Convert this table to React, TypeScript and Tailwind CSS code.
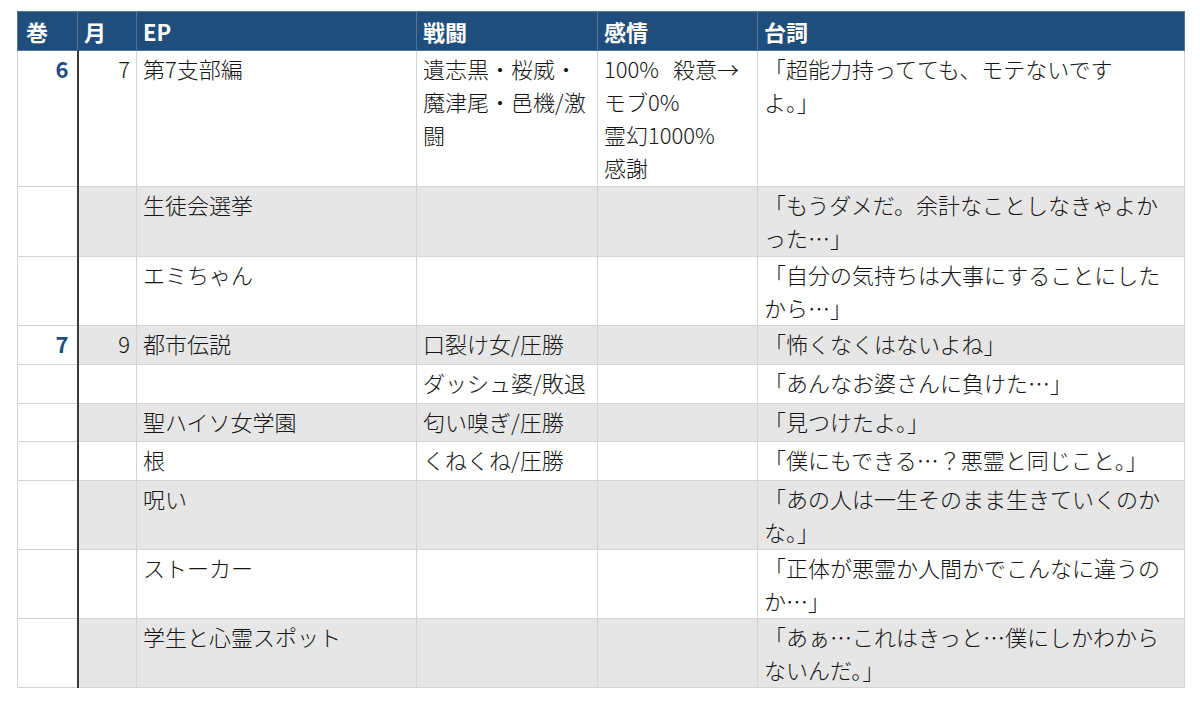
import React from 'react';

type Row = {
  vol?: string;
  month?: string;
  ep?: string;
  battle?: React.ReactNode[];
  feeling?: React.ReactNode[];
  line: string[];
  h: string;
};

const rows: Row[] = [
  {
    vol: '6',
    month: '7',
    ep: '第7支部編',
    battle: ['遺志黒・桜威・', '魔津尾・邑機/激', '闘'],
    feeling: [
      <>
        100%<span className="ml-[14px]">殺意→</span>
      </>,
      'モブ0%',
      '霊幻1000%',
      '感謝',
    ],
    line: ['「超能力持ってても、モテないです', 'よ。」'],
    h: 'h-[136px]',
  },
  { ep: '生徒会選挙', line: ['「もうダメだ。余計なことしなきゃよか', 'った…」'], h: 'h-[70px]' },
  { ep: 'エミちゃん', line: ['「自分の気持ちは大事にすることにした', 'から…」'], h: 'h-[69px]' },
  { vol: '7', month: '9', ep: '都市伝説', battle: ['口裂け女/圧勝'], line: ['「怖くなくはないよね」'], h: 'h-[39px]' },
  { battle: ['ダッシュ婆/敗退'], line: ['「あんなお婆さんに負けた…」'], h: 'h-[39px]' },
  { ep: '聖ハイソ女学園', battle: ['匂い嗅ぎ/圧勝'], line: ['「見つけたよ。」'], h: 'h-[38px]' },
  { ep: '根', battle: ['くねくね/圧勝'], line: ['「僕にもできる…？悪霊と同じこと。」'], h: 'h-[39px]' },
  { ep: '呪い', line: ['「あの人は一生そのまま生きていくのか', 'な。」'], h: 'h-[69px]' },
  { ep: 'ストーカー', line: ['「正体が悪霊か人間かでこんなに違うの', 'か…」'], h: 'h-[69px]' },
  { ep: '学生と心霊スポット', line: ['「あぁ…これはきっと…僕にしかわから', 'ないんだ。」'], h: 'h-[69px]' },
];

const Lines = ({ items }: { items?: React.ReactNode[] }) => (
  <>
    {items?.map((t, i) => (
      <div key={i} className="whitespace-nowrap">
        {t}
      </div>
    ))}
  </>
);

export default function App() {
  const cell = 'border border-[#d4d4d4] align-top px-[6px] pt-[1px]';
  const head = 'border border-[#52759c] px-[6px] text-left font-bold text-white';

  return (
    <div
      className="min-h-[704px] bg-white pl-[17px] pt-[11px] text-[#151515]"
      style={{ fontFamily: '"Noto Sans CJK JP", "Noto Sans", sans-serif' }}
    >
      <table className="w-[1167px] table-fixed border-collapse text-[22px] leading-[33px] font-light">
        <colgroup>
          <col className="w-[60px]" />
          <col className="w-[59px]" />
          <col className="w-[280px]" />
          <col className="w-[181px]" />
          <col className="w-[160px]" />
          <col className="w-[427px]" />
        </colgroup>
        <thead>
          <tr className="h-[39px] bg-[#1f4e7c] border-b border-[#163a5e]">
            <th className={`${head} pl-[8px]`}>巻</th>
            <th className={head}>月</th>
            <th className={head}>EP</th>
            <th className={head}>戦闘</th>
            <th className={head}>感情</th>
            <th className={head}>台詞</th>
          </tr>
        </thead>
        <tbody>
          {rows.map((r, i) => {
            const bg = i % 2 === 1 ? 'bg-[#e6e6e6]' : 'bg-white';
            return (
              <tr key={i} className={r.h}>
                <td className={`${cell} bg-white text-right pr-[8px] font-bold text-[#1f4e7c]`}>{r.vol}</td>
                <td className={`${cell} ${bg} text-right pr-[6px] border-l-2 border-l-[#3a3a3a]`}>{r.month}</td>
                <td className={`${cell} ${bg}`}>{r.ep}</td>
                <td className={`${cell} ${bg}`}>
                  <Lines items={r.battle} />
                </td>
                <td className={`${cell} ${bg}`}>
                  <Lines items={r.feeling} />
                </td>
                <td className={`${cell} ${bg}`}>
                  <Lines items={r.line} />
                </td>
              </tr>
            );
          })}
        </tbody>
      </table>
    </div>
  );
}
